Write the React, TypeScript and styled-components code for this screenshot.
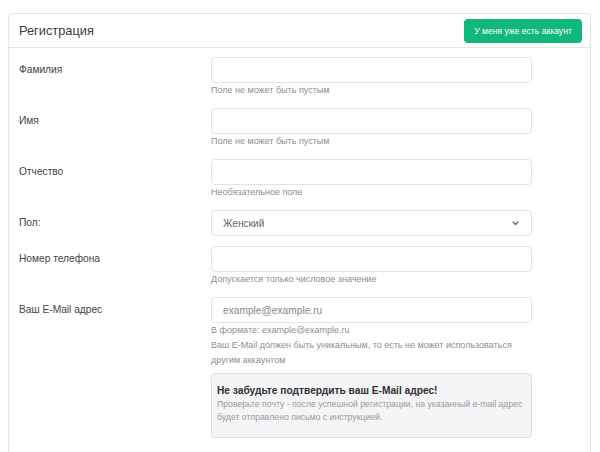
import React from "react";
import styled, { createGlobalStyle } from "styled-components";

const Global = createGlobalStyle`
  html, body { margin: 0; padding: 0; background: #ffffff; }
  body { font-family: "Liberation Sans", Arial, sans-serif; color: #333; overflow: hidden; }
  * { box-sizing: border-box; }
`;

const Page = styled.div`
  padding: 13px 10px 0 8px;
`;

const Card = styled.div`
  width: 583px;
  border: 1px solid #e6e6e6;
  border-radius: 4px;
  background: #fff;
`;

const Header = styled.div`
  display: flex;
  align-items: center;
  justify-content: space-between;
  height: 34px;
  padding: 0 8px 0 10px;
  border-bottom: 1px solid #e6e6e6;
`;

const Title = styled.h1`
  margin: 0;
  font-size: 12.8px;
  font-weight: 400;
  color: #3a3a3a;
`;

const GreenButton = styled.button`
  width: 118px;
  height: 24px;
  padding: 0;
  border: none;
  border-radius: 4px;
  background: #12b87a;
  color: #fff;
  font-family: inherit;
  font-size: 8.6px;
  cursor: pointer;
`;

const Body = styled.div`
  display: grid;
  grid-template-columns: 192px 321px;
  row-gap: 10px;
  padding: 9px 10px 40px 10px;
`;

const Label = styled.label`
  font-size: 10.2px;
  line-height: 26px;
  color: #444;
`;

const Field = styled.div`
  display: flex;
  flex-direction: column;
`;

const Input = styled.input`
  width: 321px;
  height: 26px;
  padding: 0 11px;
  border: 1px solid #e2e2e2;
  border-radius: 4px;
  font-family: inherit;
  font-size: 10.2px;
  color: #555;
  outline: none;
  &::placeholder { color: #888; }
`;

const SelectBox = styled.div`
  display: flex;
  align-items: center;
  justify-content: space-between;
  width: 321px;
  height: 26px;
  padding: 0 12px 0 11px;
  border: 1px solid #e2e2e2;
  border-radius: 4px;
  font-size: 10.2px;
  color: #666;
`;

const Help = styled.div`
  font-size: 9px;
  line-height: 15px;
  color: #8e8e8e;
`;

const Alert = styled.div`
  margin-top: 5px;
  height: 65px;
  padding: 10px 5px 0 5px;
  background: #f4f5f7;
  border: 1px solid #dcdfe3;
  border-radius: 4px;
`;

const AlertTitle = styled.div`
  font-size: 10.2px;
  font-weight: 700;
  line-height: 14px;
  color: #2f2f2f;
`;

const AlertText = styled.div`
  font-size: 8.7px;
  line-height: 13px;
  color: #9a9a9a;
`;

const Chevron = () => (
  <svg width="7" height="5" viewBox="0 0 7 5" fill="none">
    <path d="M1 1 L3.5 3.5 L6 1" stroke="#666" strokeWidth="1.2" strokeLinecap="round" strokeLinejoin="round" />
  </svg>
);

export default function App() {
  return (
    <Page>
      <Global />
      <Card>
        <Header>
          <Title>Регистрация</Title>
          <GreenButton>У меня уже есть аккаунт</GreenButton>
        </Header>
        <Body>
          <Label>Фамилия</Label>
          <Field>
            <Input />
            <Help>Поле не может быть пустым</Help>
          </Field>

          <Label>Имя</Label>
          <Field>
            <Input />
            <Help>Поле не может быть пустым</Help>
          </Field>

          <Label>Отчество</Label>
          <Field>
            <Input />
            <Help>Необязательное поле</Help>
          </Field>

          <Label>Пол:</Label>
          <Field>
            <SelectBox>
              <span>Женский</span>
              <Chevron />
            </SelectBox>
          </Field>

          <Label>Номер телефона</Label>
          <Field>
            <Input />
            <Help>Допускается только числовое значение</Help>
          </Field>

          <Label>Ваш E-Mail адрес</Label>
          <Field>
            <Input placeholder="example@example.ru" />
            <Help>В формате: example@example.ru</Help>
            <Help>Ваш E-Mail должен быть уникальным, то есть не может использоваться другим аккаунтом</Help>
            <Alert>
              <AlertTitle>Не забудьте подтвердить ваш E-Mail адрес!</AlertTitle>
              <AlertText>
                Проверьте почту - после успешной регистрации, на указанный e-mail адрес будет отправлено письмо с инструкцией.
              </AlertText>
            </Alert>
          </Field>
        </Body>
      </Card>
    </Page>
  );
}
